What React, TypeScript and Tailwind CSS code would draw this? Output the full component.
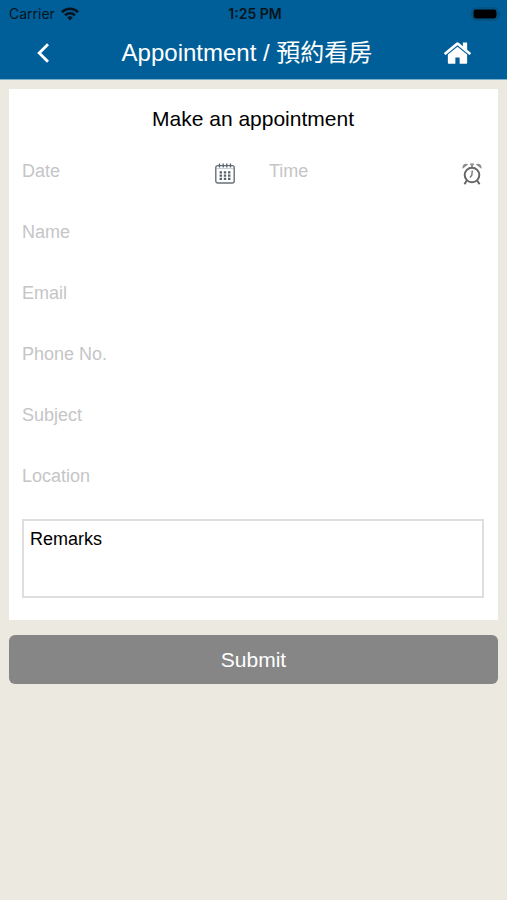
import type { ComponentProps, FormEvent, ReactNode } from "react";

const FIELDS = [
  { name: "name", label: "Name", type: "text" },
  { name: "email", label: "Email", type: "email" },
  { name: "phone", label: "Phone No.", type: "tel" },
  { name: "subject", label: "Subject", type: "text" },
  { name: "location", label: "Location", type: "text" },
];

function WifiIcon() {
  return (
    <svg viewBox="0 0 18 14" className="h-[14px] w-[18px]" aria-hidden="true">
      <g fill="none" stroke="#071420" strokeWidth="2.6">
        <path d="M1 5.1a11.4 11.4 0 0 1 16 0" />
        <path d="M4 8.3a7.1 7.1 0 0 1 10 0" />
      </g>
      <path d="M9 13.4 6.2 10.6a4 4 0 0 1 5.6 0z" fill="#071420" />
    </svg>
  );
}

function BatteryIcon() {
  return (
    <svg viewBox="0 0 30 14" className="h-[14px] w-[30px]" aria-hidden="true">
      <rect x="1" y="1" width="26" height="12" rx="4" fill="none" stroke="#0b4a74" strokeWidth="1.2" />
      <rect x="2.5" y="2.5" width="23" height="9" rx="2.4" fill="#000" />
      <path d="M28.2 4.800c1.600.6 1.600 3.800 0 4.400z" fill="#0b4a74" />
    </svg>
  );
}

function BackIcon() {
  return (
    <svg viewBox="0 0 14 20" className="h-5 w-[14px]" aria-hidden="true">
      <path d="M12 1.2 3.200 10l8.800 8.800" fill="none" stroke="#fff" strokeWidth="2.8" />
    </svg>
  );
}

function HomeIcon() {
  return (
    <svg viewBox="89 240 1614 1300" className="h-[22px] w-[27px]" aria-hidden="true">
      <path
        d="M1472 992v480q0 26-19 45t-45 19h-384v-384h-256v384h-384q-26 0-45-19t-19-45v-480q0-1 .5-3t.5-3l575-474 575 474q1 2 1 6zm223-69l-62 74q-8 9-21 11h-3q-13 0-21-7l-692-577-692 577q-12 8-24 7-13-2-21-11l-62-74q-8-10-7-23.5t11-21.5l719-599q32-26 76-26t76 26l244 204v-195q0-14 9-23t23-9h192q14 0 23 9t9 23v408l219 182q10 8 11 21.5t-7 23.500z"
        fill="#fff"
      />
    </svg>
  );
}

function CalendarIcon() {
  return (
    <svg viewBox="0 0 20 21" className="h-[21px] w-5" aria-hidden="true">
      <rect x="0.8" y="2.6" width="18.4" height="17.4" rx="2" fill="none" stroke="#66707b" strokeWidth="1.4" />
      <path d="M1 5.6h18" stroke="#a9b0b7" strokeWidth="0.7" />
      <path d="M4.500 0.500v4M8.200 0.500v4M11.800 0.500v4M15.500 0.500v4" stroke="#56616d" strokeWidth="1.300" />
      <path
        d="M4.600 9.300h2.400M8.800 9.300h2.400M13 9.300h2.400M4.600 12.600h2.400M8.800 12.600h2.400M13 12.600h2.400M4.600 15.900h2.400M8.800 15.900h2.400M13 15.900h2.400"
        stroke="#56616d"
        strokeWidth="2.2"
      />
    </svg>
  );
}

function AlarmIcon() {
  return (
    <svg viewBox="0 0 20 22" className="h-[22px] w-5" aria-hidden="true">
      <circle cx="10" cy="12" r="7.300" fill="none" stroke="#666" strokeWidth="2" />
      <path d="M10.300 7.500 9.800 12.300 8 14.500" fill="none" stroke="#777" strokeWidth="1.400" />
      <path d="M4.600 17.800 2.500 21.300M15.400 17.800l2.100 3.500" stroke="#666" strokeWidth="2" />
      <path d="M0.700 5.800C-.4 2.200 3 -.6 6.300 1.300z" fill="#8c8c8c" />
      <path d="M19.300 5.800c1.100-3.600-2.300-6.400-5.600-4.500z" fill="#8c8c8c" />
      <path d="M8.200 1.300h3.600M10 1.300v3" stroke="#888" strokeWidth="1.700" />
    </svg>
  );
}

function Field({ label, icon, ...rest }: { label: string; icon?: ReactNode } & ComponentProps<"input">) {
  return (
    <label className="flex h-[61px] min-w-0 items-center pr-[2px]">
      <input
        aria-label={label}
        placeholder={label}
        className="h-10 w-full min-w-0 flex-1 bg-transparent text-[18px] text-black outline-none placeholder:text-[#c5c5c7]"
        {...rest}
      />
      {icon && <span className="shrink-0 pt-1">{icon}</span>}
    </label>
  );
}

function StatusBar() {
  return (
    <div className="grid h-[27px] grid-cols-3 items-center pl-[9px] pr-[6px] font-['Inter',sans-serif] text-[14px] text-[#071420]">
      <div className="flex items-center gap-[6px]">
        <span>Carrier</span>
        <WifiIcon />
      </div>
      <span className="text-center font-semibold">1:25 PM</span>
      <div className="flex justify-end">
        <BatteryIcon />
      </div>
    </div>
  );
}

export default function App() {
  const handleSubmit = (e: FormEvent) => e.preventDefault();

  return (
    <div className="min-h-screen bg-[#ece9e0] font-['Liberation_Sans','Noto_Sans_CJK_TC',sans-serif]">
      <header className="border-b border-[#7fb0cb] bg-[#005f98]">
        <StatusBar />
        <div className="flex h-[52px] items-center justify-between px-9 text-white">
          <button type="button" aria-label="Back">
            <BackIcon />
          </button>
          <h1 className="text-[24px] leading-8">Appointment / 預約看房</h1>
          <button type="button" aria-label="Home">
            <HomeIcon />
          </button>
        </div>
      </header>

      <form onSubmit={handleSubmit} className="px-[9px] pt-[9px]">
        <section className="bg-white pb-[22px] pl-[13px] pr-[14px] pt-2">
          <h2 className="flex h-11 items-center justify-center text-[21px] text-black">Make an appointment</h2>

          {/* Date + time share one row */}
          <div className="grid grid-cols-2 gap-8">
            <Field label="Date" name="date" type="text" icon={<CalendarIcon />} />
            <Field label="Time" name="time" type="text" icon={<AlarmIcon />} />
          </div>

          {FIELDS.map((field) => (
            <Field key={field.name} {...field} />
          ))}

          <textarea
            name="remarks"
            aria-label="Remarks"
            defaultValue="Remarks"
            className="mt-3 block h-[79px] w-full resize-none border-2 border-[#dedede] px-[6px] py-[6px] text-[18px] leading-6 text-black outline-none"
          />
        </section>

        <button type="submit" className="mt-[15px] h-[49px] w-full rounded-md bg-[#868686] text-[21px] text-white">
          Submit
        </button>
      </form>
    </div>
  );
}
